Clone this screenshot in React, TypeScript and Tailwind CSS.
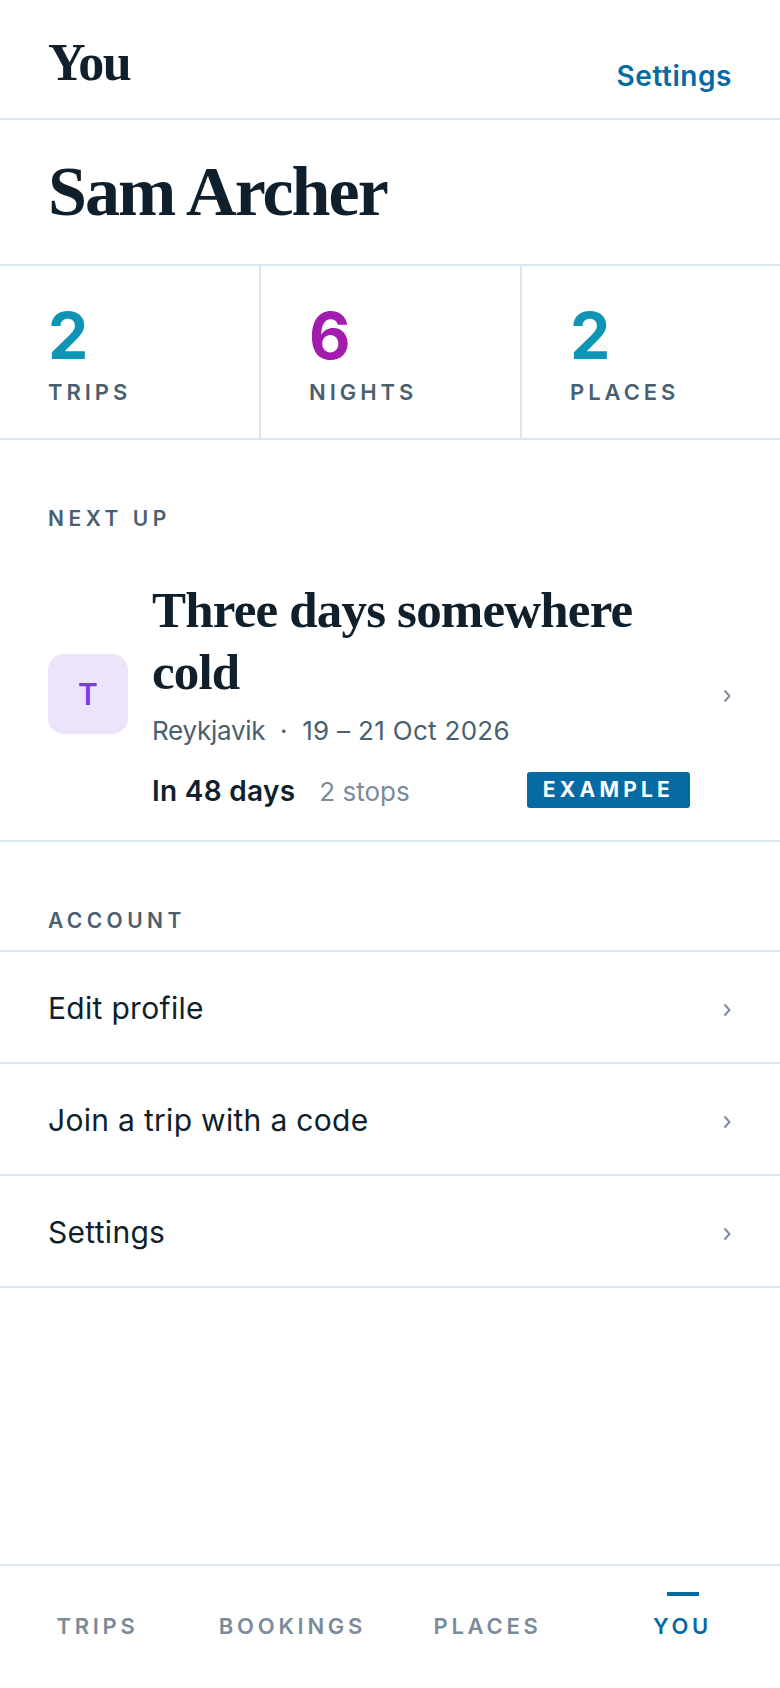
import React from 'react';

const serif = "font-['Liberation_Serif',serif]";

const stats = [
  { value: '2', label: 'TRIPS', color: 'text-[#0e94b4]' },
  { value: '6', label: 'NIGHTS', color: 'text-[#a21caf]' },
  { value: '2', label: 'PLACES', color: 'text-[#0e94b4]' },
];

const accountRows = ['Edit profile', 'Join a trip with a code', 'Settings'];

const tabs = [
  { label: 'TRIPS', active: false },
  { label: 'BOOKINGS', active: false },
  { label: 'PLACES', active: false },
  { label: 'YOU', active: true },
];

function Chevron() {
  return (
    <svg width="10" height="14" viewBox="0 0 10 14" fill="none" className="mt-[5px] shrink-0">
      <path d="M2.5 1.5 L7.5 7 L2.5 12.5" stroke="#7b8b99" strokeWidth="2" />
    </svg>
  );
}

export default function App() {
  return (
    <div className="flex h-screen w-full flex-col bg-white font-['Inter',sans-serif] text-[#0f1f2b]">
      {/* Header */}
      <header className="flex h-[120px] shrink-0 items-start justify-between border-b-2 border-[#dde6ee] pl-12 pr-12">
        <h1 className={`${serif} mt-[35px] text-[52px] leading-[56px] font-bold tracking-[-0.03em]`}>You</h1>
        <a className="mt-[59px] text-[28px] leading-[34px] font-semibold tracking-[0.02em] text-[#066aa3]">Settings</a>
      </header>

      {/* Profile name */}
      <div className="flex h-[146px] shrink-0 items-center border-b-2 border-[#dde6ee] pl-12">
        <h2 className={`${serif} text-[70px] leading-[76px] font-bold tracking-[-0.028em]`}>Sam Archer</h2>
      </div>

      {/* Stats */}
      <div className="grid h-[174px] shrink-0 grid-cols-[261px_261px_1fr] border-b-2 border-[#dde6ee]">
        {stats.map((stat, i) => (
          <div key={i} className={`flex flex-col pl-12 pt-[38px] ${i < 2 ? 'border-r-2 border-[#dde6ee]' : ''}`}>
            <span className={`text-[64px] leading-[64px] font-bold ${stat.color}`}>{stat.value}</span>
            <span className="mt-[10px] text-[22px] leading-[28px] font-semibold tracking-[0.18em] text-[#4a5f70]">{stat.label}</span>
          </div>
        ))}
      </div>

      {/* Next trip */}
      <section className="shrink-0 border-b-2 border-[#dde6ee] pl-12 pr-12">
        <div className="pt-[66px] text-[21px] leading-[26px] font-semibold tracking-[0.215em] text-[#4a5f70]">NEXT UP</div>
        <div className="mt-[47px] flex items-center pb-[32px]">
          <div className="flex h-[80px] w-[80px] shrink-0 items-center justify-center rounded-[16px] bg-[#ede4fc] pt-[2px] text-[30px] font-semibold text-[#7c3aed]">
            T
          </div>
          <div className="ml-6 min-w-0 flex-1">
            <h3 className={`${serif} text-[51px] leading-[62px] font-bold tracking-[-0.016em] pr-8`}>Three days somewhere cold</h3>
            <p className="mt-[12px] text-[26px] leading-[32px] text-[#4a5f70]">
              <span className="tracking-[-0.01em]">Reykjavik</span> &nbsp;·&nbsp; <span className="tracking-[0.012em]">19 – 21 Oct 2026</span>
            </p>
            <div className="mt-[25px] flex items-center pr-8">
              <span className="h-[36px] text-[28px] leading-[38px] font-semibold tracking-[0.01em]">In 48 days</span>
              <span className="ml-6 h-[36px] text-[26px] leading-[40px] text-[#7b8b99]">2 stops</span>
              <span className="ml-auto rounded-[3px] bg-[#066aa3] px-4 py-[3px] text-[21px] leading-[30px] font-bold tracking-[0.2em] text-white">EXAMPLE</span>
            </div>
          </div>
          <Chevron />
        </div>
      </section>

      {/* Account links */}
      <section className="shrink-0">
        <div className="border-b-2 border-[#dde6ee] pl-12 pt-[66px] pb-[16px] text-[21px] leading-[26px] font-semibold tracking-[0.21em] text-[#4a5f70]">ACCOUNT</div>
        {accountRows.map((row) => (
          <div key={row} className="flex h-[112px] items-center justify-between border-b-2 border-[#dde6ee] pl-12 pr-12">
            <span className="pt-[2px] text-[30px] leading-[38px] tracking-[0.01em]">{row}</span>
            <Chevron />
          </div>
        ))}
      </section>

      <div className="flex-1" />

      {/* Tab bar */}
      <nav className="grid h-[124px] shrink-0 grid-cols-4 border-t-2 border-[#dde6ee]">
        {tabs.map((tab) => (
          <div key={tab.label} className="flex flex-col items-center pt-[26px]">
            <div className={`h-[4px] w-[32px] ${tab.active ? 'bg-[#066aa3]' : ''}`} />
            <span className={`mt-[16px] text-[22px] leading-[28px] font-semibold tracking-[0.17em] ${tab.active ? 'text-[#066aa3]' : 'text-[#7b8b99]'}`}>
              {tab.label}
            </span>
          </div>
        ))}
      </nav>
    </div>
  );
}
